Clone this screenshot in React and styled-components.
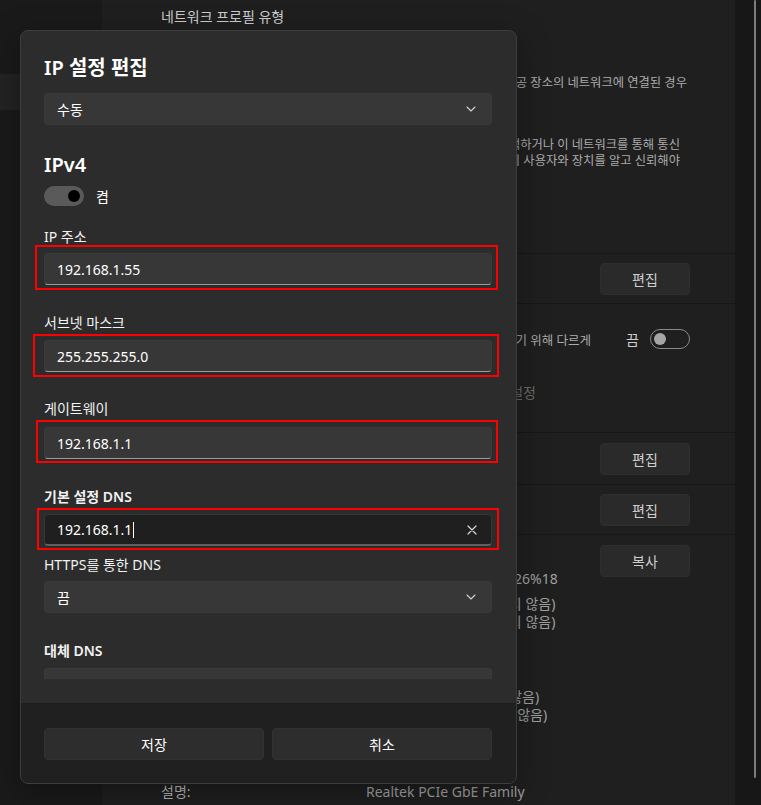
import React from 'react'
import styled, { createGlobalStyle } from 'styled-components'

const GlobalStyle = createGlobalStyle`
  * { box-sizing: border-box; }
  html, body { margin: 0; padding: 0; background: #1f1f1f; }
  body {
    font-family: "Noto Sans", "Noto Sans CJK KR", sans-serif;
    font-size: 14px;
    color: #fff;
  }
`

const Chevron = () => (
  <svg width="10" height="6" viewBox="0 0 10 6">
    <path d="M1 1L5 5L9 1" fill="none" stroke="#d0d0d0" strokeWidth="1.1" strokeLinecap="round" strokeLinejoin="round" />
  </svg>
)

const ClearIcon = () => (
  <svg width="10" height="10" viewBox="0 0 10 10">
    <path d="M1 1L9 9M9 1L1 9" fill="none" stroke="#d6d6d6" strokeWidth="1.2" strokeLinecap="round" />
  </svg>
)

const properties = [
  { label: '링크 속도(수신/전송):', values: ['1000/1000 (Mbps)'] },
  { label: '링크-로컬 IPv6 주소:', values: ['fe80::3d1a:7c2e:9b5f:426%18'] },
  { label: 'IPv6 DNS 서버:', values: ['fe80::a:1%18 (암호화되지 않음)', 'fe80::a:2%18 (암호화되지 않음)'], mt: 7 },
  { label: 'IPv4 주소:', values: ['192.168.1.55'], mt: 7 },
  { label: 'IPv4 게이트웨이:', values: ['192.168.1.1'], mt: 7 },
  { label: 'IPv4 DNS 서버:', values: ['10.10.10.1 (암호화되지 않음)', '172.16.10.1 (암호화되지 않음)'], mt: 7 },
  { label: '설명:', values: ['Realtek PCIe GbE Family'], mt: 59 },
]

const fields = [
  { label: 'IP 주소', value: '192.168.1.55', lmt: 21, imt: 6, box: [8, 6, 5, 9] },
  { label: '서브넷 마스크', value: '255.255.255.0', lmt: 28, imt: 7, box: [6, 7, 5, 11] },
  { label: '게이트웨이', value: '192.168.1.1', lmt: 27, imt: 8, box: [7, 6, 4, 8] },
]

export default function App() {
  return (
    <>
      <GlobalStyle />
      <Page>
        <Sidebar>
          <NavHighlight />
        </Sidebar>

        <Main>
          <ProfileSection>
            <SectionTitle>네트워크 프로필 유형</SectionTitle>
            <DescLine $mt={48}>커피숍과 같은 공공 장소의 네트워크에 연결된 경우</DescLine>
            <DescLine $mt={46} $mr={7}>네트워크의 장치를 검색하거나 이 네트워크를 통해 통신</DescLine>
            <DescLine $mr={7}>앱을 사용하는 경우 이 네트워크의 사용자와 장치를 알고 신뢰해야</DescLine>
          </ProfileSection>

          <SettingRow $h={50}>
            <RowLabel>IP 할당:</RowLabel>
            <GhostButton>편집</GhostButton>
          </SettingRow>

          <MeteredCard>
            <RowMain>
              <RowTextCol>
                <RowLabel>데이터 통신 연결</RowLabel>
                <RowDesc $right>이 네트워크에 연결되어 있을 때 데이터 사용량을 줄이기 위해 다르게</RowDesc>
                <RowDesc>작동할 수 있습니다.</RowDesc>
              </RowTextCol>
              <ToggleGroup>
                <span>끔</span>
                <Switch>
                  <Knob />
                </Switch>
              </ToggleGroup>
            </RowMain>
            <DimLink>이 네트워크에서 데이터 사용량을 제어하는 데이터 한도 설정</DimLink>
          </MeteredCard>

          <SettingRow $h={52}>
            <RowLabel>DNS 서버 할당:</RowLabel>
            <GhostButton>편집</GhostButton>
          </SettingRow>

          <SettingRow $h={50}>
            <RowLabel>IPv6 주소:</RowLabel>
            <GhostButton>편집</GhostButton>
          </SettingRow>

          <InfoCard>
            <PropList>
              {properties.map(p => (
                <PropRow key={p.label} $mt={p.mt}>
                  <PropLabel>{p.label}</PropLabel>
                  <PropValue>
                    {p.values.map(v => <div key={v}>{v}</div>)}
                  </PropValue>
                </PropRow>
              ))}
            </PropList>
            <GhostButton>복사</GhostButton>
          </InfoCard>
        </Main>

        <Rail>
          <RailThumb />
        </Rail>

        <Dialog>
          <DialogBody>
            <Scroller>
              <DialogTitle>IP 설정 편집</DialogTitle>
              <ComboBox $mt={11}>
                <span>수동</span>
                <Chevron />
              </ComboBox>

              <GroupHeading>IPv4</GroupHeading>
              <ToggleLine>
                <OnSwitch>
                  <OnKnob />
                </OnSwitch>
                <span>켬</span>
              </ToggleLine>

              {fields.map(f => (
                <React.Fragment key={f.label}>
                  <FieldLabel $mt={f.lmt}>{f.label}</FieldLabel>
                  <FieldBox $mt={f.imt}>
                    <TextBox>{f.value}</TextBox>
                    <Highlight $t={f.box[0]} $r={f.box[1]} $b={f.box[2]} $l={f.box[3]} />
                  </FieldBox>
                </React.Fragment>
              ))}

              <FieldLabel $mt={28} $strong>기본 설정 DNS</FieldLabel>
              <FieldBox $mt={7}>
                <TextBox $focused>
                  <TypedValue>
                    192.168.1.1<Caret />
                  </TypedValue>
                  <ClearIcon />
                </TextBox>
                <Highlight $t={6} $r={7} $b={4} $l={7} />
              </FieldBox>

              <FieldLabel $mt={9}>HTTPS를 통한 DNS</FieldLabel>
              <ComboBox $mt={6}>
                <span>끔</span>
                <Chevron />
              </ComboBox>

              <FieldLabel $mt={28} $strong>대체 DNS</FieldLabel>
              <FieldBox $mt={7}>
                <TextBox />
              </FieldBox>
            </Scroller>
          </DialogBody>

          <DialogFooter>
            <FooterButton>저장</FooterButton>
            <FooterButton>취소</FooterButton>
          </DialogFooter>
        </Dialog>
      </Page>
    </>
  )
}

const Page = styled.div`
  position: relative;
  width: 100vw;
  height: 100vh;
  overflow: hidden;
  display: grid;
  grid-template-columns: 102px 1fr 26px;
`

const Sidebar = styled.aside`
  background: #1a1a1a;
  padding-top: 74px;
`

const NavHighlight = styled.div`
  height: 36px;
  background: #232323;
`

const Main = styled.main`
  background: #1f1f1f;
  display: flex;
  flex-direction: column;
  color: #c6c6c6;
  min-width: 0;
`

const ProfileSection = styled.section`
  height: 253px;
  padding: 7px 48px 0 59px;
`

const SectionTitle = styled.div`
  line-height: 20px;
  color: #cdcdcd;
`

const DescLine = styled.div`
  margin-top: ${p => p.$mt || 0}px;
  margin-right: ${p => p.$mr || 0}px;
  font-size: 12.3px;
  line-height: 16px;
  color: #ababab;
  text-align: right;
  white-space: nowrap;
`

const SettingRow = styled.div`
  height: ${p => p.$h}px;
  border-top: 1px solid #171717;
  padding: 0 45px 0 59px;
  display: flex;
  align-items: center;
  justify-content: space-between;
`

const RowLabel = styled.div`
  line-height: 20px;
  color: #cdcdcd;
`

const GhostButton = styled.button`
  flex-shrink: 0;
  width: 90px;
  height: 32px;
  background: #2a2a2a;
  border: 1px solid #2e2e2e;
  border-radius: 4px;
  color: #cfcfcf;
  font: inherit;
  font-size: 14px;
  padding: 0;
`

const MeteredCard = styled.div`
  height: 129px;
  border-top: 1px solid #171717;
  padding: 8px 45px 0 59px;
  display: flex;
  flex-direction: column;
`

const RowMain = styled.div`
  display: flex;
  align-items: center;
`

const RowTextCol = styled.div`
  flex: 1;
  min-width: 0;
  padding-right: 35px;
`

const RowDesc = styled.div`
  font-size: 12.5px;
  line-height: 17px;
  color: #ababab;
  white-space: nowrap;
  text-align: ${p => (p.$right ? 'right' : 'left')};
`

const ToggleGroup = styled.div`
  display: flex;
  align-items: center;
  gap: 11px;
  color: #cfcfcf;
`

const Switch = styled.div`
  width: 40px;
  height: 20px;
  border-radius: 10px;
  border: 1px solid #8a8a8a;
  padding: 0 3px;
  display: flex;
  align-items: center;
`

const Knob = styled.div`
  width: 12px;
  height: 12px;
  border-radius: 50%;
  background: #a6a6a6;
`

const DimLink = styled.div`
  margin-top: 17px;
  margin-right: 154px;
  line-height: 20px;
  color: #6c6c6c;
  white-space: nowrap;
  text-align: right;
`

const InfoCard = styled.div`
  flex: 1;
  border-top: 1px solid #171717;
  padding: 10px 45px 0 59px;
  display: flex;
  align-items: flex-start;
`

const PropList = styled.div`
  flex: 1;
  min-width: 0;
  padding-top: 7px;
`

const PropRow = styled.div`
  display: grid;
  grid-template-columns: 205px 1fr;
  margin-top: ${p => p.$mt || 0}px;
  line-height: 18px;
`

const PropLabel = styled.div`
  color: #b6b6b6;
  white-space: nowrap;
`

const PropValue = styled.div`
  color: #a0a0a0;
  white-space: nowrap;
`

const Rail = styled.div`
  background: #171717;
  padding-left: 19px;
`

const RailThumb = styled.div`
  width: 2px;
  height: 778px;
  border-radius: 1px;
  background: #7c7c7c;
`

const Dialog = styled.div`
  position: absolute;
  left: 20px;
  top: 30px;
  width: 497px;
  height: 754px;
  background: #2c2c2c;
  border: 1px solid #3d3d3d;
  border-radius: 8px;
  overflow: hidden;
  display: flex;
  flex-direction: column;
  box-shadow: 0 8px 32px rgba(0, 0, 0, 0.35);
`

const DialogBody = styled.div`
  flex: 1;
  min-height: 0;
  padding: 23px 24px 24px 23px;
  display: flex;
  flex-direction: column;
`

const Scroller = styled.div`
  flex: 1;
  min-height: 0;
  overflow: hidden;
  margin: 0 -24px 0 -23px;
  padding: 0 24px 0 23px;
`

const DialogTitle = styled.h2`
  margin: 0;
  font-size: 20px;
  font-weight: 600;
  line-height: 28px;
  color: #fff;
`

const ComboBox = styled.div`
  margin-top: ${p => p.$mt}px;
  height: 32px;
  padding: 0 15px 0 12px;
  display: flex;
  align-items: center;
  justify-content: space-between;
  background: #373737;
  border: 1px solid #3a3a3a;
  border-radius: 4px;
  color: #fff;
`

const GroupHeading = styled.h3`
  margin: 26px 0 0;
  font-size: 20px;
  font-weight: 600;
  line-height: 28px;
  color: #fff;
`

const ToggleLine = styled.div`
  margin-top: 7px;
  height: 20px;
  display: flex;
  align-items: center;
  gap: 12px;
  color: #fff;
`

const OnSwitch = styled.div`
  width: 40px;
  height: 20px;
  border-radius: 10px;
  background: #5a5a5a;
  padding: 0 4px;
  display: flex;
  align-items: center;
  justify-content: flex-end;
`

const OnKnob = styled.div`
  width: 12px;
  height: 12px;
  border-radius: 50%;
  background: #000;
`

const FieldLabel = styled.div`
  margin-top: ${p => p.$mt}px;
  line-height: 20px;
  font-weight: ${p => (p.$strong ? 600 : 400)};
  color: #f2f2f2;
`

const FieldBox = styled.div`
  position: relative;
  margin-top: ${p => p.$mt}px;
`

const TextBox = styled.div`
  height: 32px;
  padding: 0 14px 0 12px;
  display: flex;
  align-items: center;
  justify-content: space-between;
  background: ${p => (p.$focused ? '#1f1f1f' : '#373737')};
  border: 1px solid ${p => (p.$focused ? '#363636' : '#3b3b3b')};
  border-bottom: ${p => (p.$focused ? '2px solid #5e5e5e' : '1px solid #9b9b9b')};
  border-radius: 4px;
  color: #fff;
`

const TypedValue = styled.span`
  display: inline-flex;
  align-items: center;
`

const Caret = styled.span`
  display: inline-block;
  width: 1px;
  height: 16px;
  margin-left: 1px;
  background: #fff;
`

const Highlight = styled.div`
  position: absolute;
  top: ${p => -p.$t}px;
  right: ${p => -p.$r}px;
  bottom: ${p => -p.$b}px;
  left: ${p => -p.$l}px;
  border: 2px solid #ff0000;
  pointer-events: none;
`

const DialogFooter = styled.div`
  border-top: 1px solid #1c1c1c;
  background: #202020;
  padding: 24px 24px 23px 23px;
  display: grid;
  grid-template-columns: 1fr 1fr;
  gap: 8px;
`

const FooterButton = styled.button`
  height: 32px;
  background: #2d2d2d;
  border: 1px solid #323232;
  border-radius: 4px;
  color: #fff;
  font: inherit;
  font-size: 14px;
  padding: 0;
`
